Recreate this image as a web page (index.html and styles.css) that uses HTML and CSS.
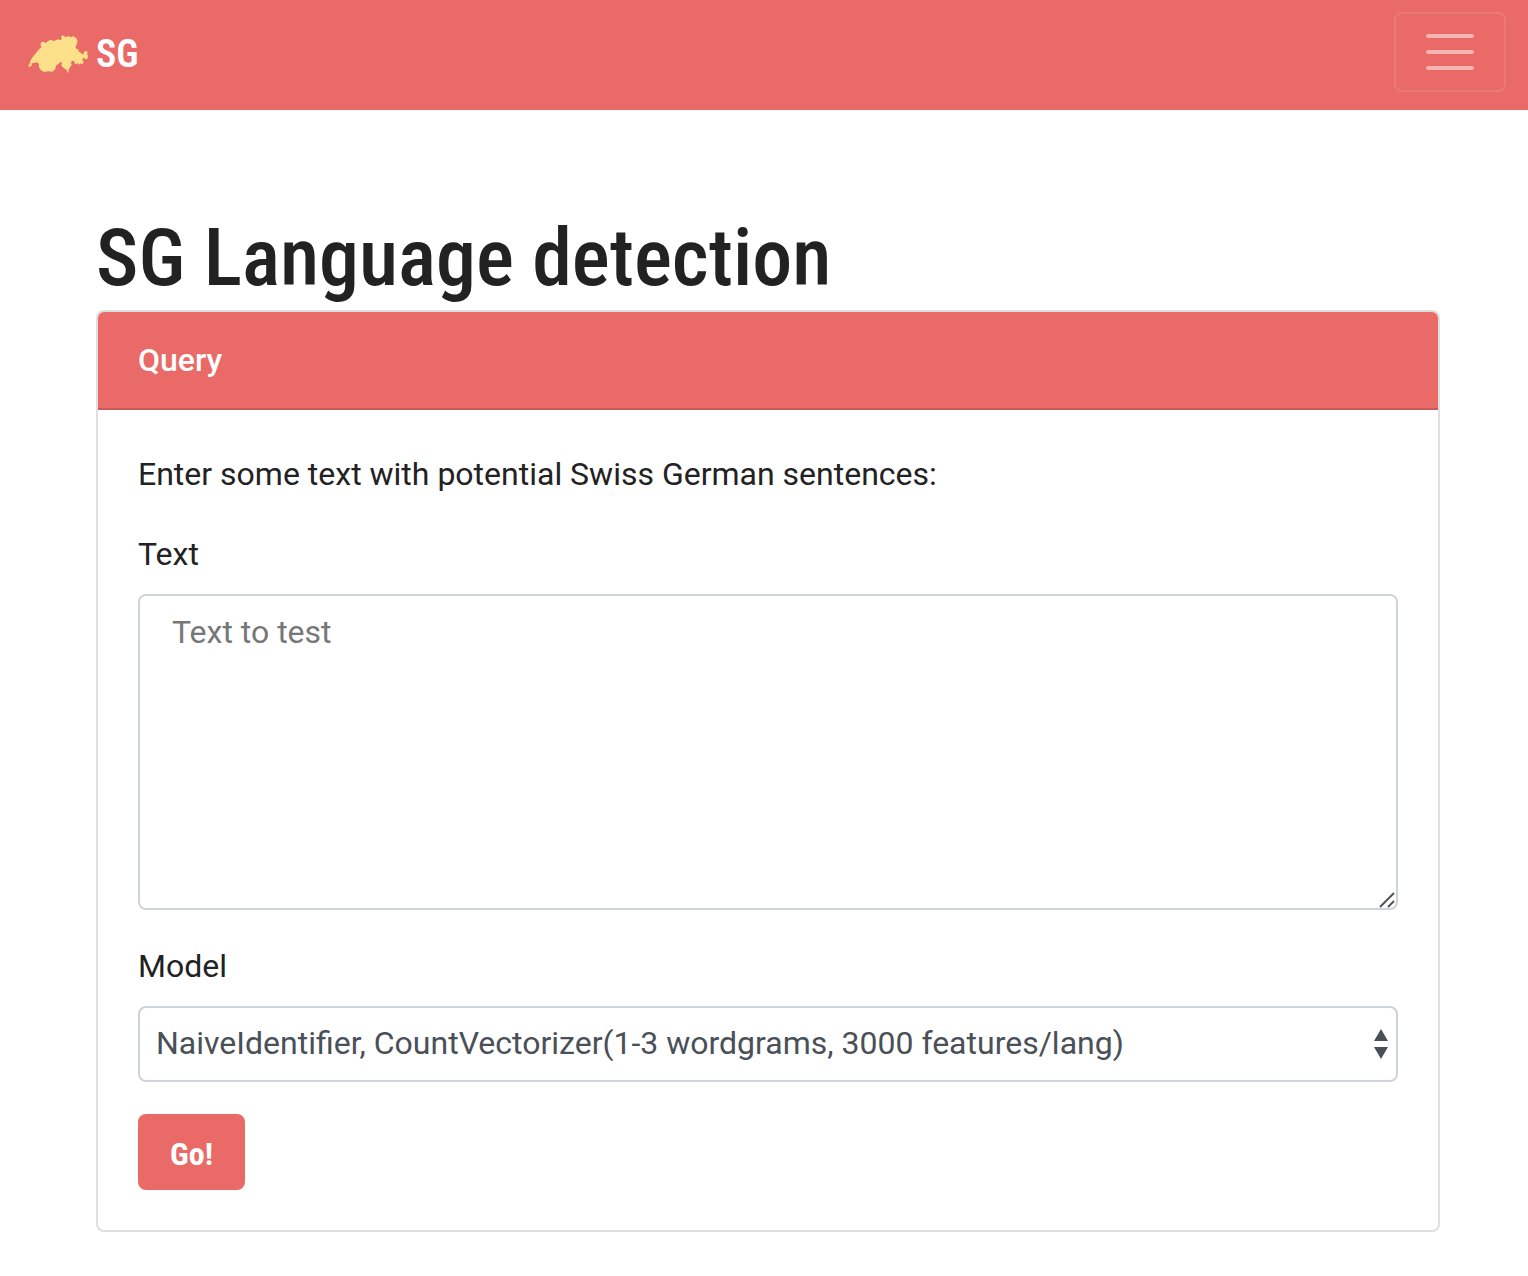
FILE: index.html
```html
<!DOCTYPE html>
<html lang="en">
<head>
<meta charset="utf-8">
<meta name="viewport" content="width=device-width, initial-scale=1">
<title>SG Language detection</title>
<link rel="stylesheet" href="styles.css">
</head>
<body>
<nav class="navbar">
  <a class="brand" href="#">
    <svg class="brand-logo" viewBox="36 44 180 114" aria-hidden="true">
      <path d="M37 139 L38 134 L42 130 L41 126 L48 113 L58 100 L69 87 L77 80 L73 73 L76 66 L83 64 L88 68 L94 64 L103 58 L114 62 L126 57 L134 60 L137 56 L135 49 L140 45 L148 50 L158 47 L164 51 L172 48 L181 54 L185 62 L182 72 L178 83 L188 88 L187 93 L194 97 L199 102 L204 101 L203 96 L209 92 L215 94 L213 102 L216 107 L214 117 L208 116 L203 112 L199 117 L203 126 L200 132 L194 129 L191 133 L186 129 L177 132 L174 122 L168 121 L165 126 L167 134 L161 142 L158 147 L157 157 L154 156 L152 149 L144 144 L136 136 L138 127 L134 125 L128 130 L120 136 L117 148 L108 154 L96 153 L84 155 L74 149 L69 140 L68 129 L60 126 L52 129 L47 128 L47 136 L41 139Z"/>
    </svg>
    <span>SG</span>
  </a>
  <button class="toggler" type="button" aria-label="Toggle navigation">
    <span class="toggler-bar"></span>
    <span class="toggler-bar"></span>
    <span class="toggler-bar"></span>
  </button>
</nav>

<main class="container">
  <h1 class="title">SG Language detection</h1>
  <section class="card">
    <h2 class="card-header">Query</h2>
    <form class="card-body">
      <p class="intro">Enter some text with potential Swiss German sentences:</p>
      <div class="field">
        <label for="text">Text</label>
        <div class="control">
          <textarea class="input text-input" id="text" rows="6" placeholder="Text to test"></textarea>
          <svg class="grip" viewBox="0 0 16 16" aria-hidden="true"><path d="M1 15 L15 1 M9 15 L15 9"/></svg>
        </div>
      </div>
      <div class="field">
        <label for="model">Model</label>
        <div class="control">
          <select class="input model-select" id="model">
            <option>NaiveIdentifier, CountVectorizer(1-3 wordgrams, 3000 features/lang)</option>
          </select>
          <svg class="arrows" viewBox="0 0 14 30" aria-hidden="true"><path d="M7 0 L14 12 H0Z M0 18 H14 L7 30Z"/></svg>
        </div>
      </div>
      <button class="submit" type="button">Go!</button>
    </form>
  </section>
</main>
</body>
</html>
```
FILE: styles.css
```css
*,
*::before,
*::after {
  box-sizing: border-box;
}

:root {
  --primary: #e96a67;
  --heading-font: "Roboto Condensed", "Arial Narrow", "Liberation Sans Narrow", sans-serif;
}

body {
  margin: 0;
  background: #fff;
  color: #222;
  font-family: Roboto, sans-serif;
  font-size: 32px;
  line-height: 48px;
}

.navbar {
  display: flex;
  align-items: flex-start;
  justify-content: space-between;
  padding: 12px 22px 18px 28px;
  background: var(--primary);
}

.brand {
  display: flex;
  align-items: center;
  gap: 8px;
  height: 80px;
  padding-top: 4px;
  color: #fff;
  font: 600 38px/48px var(--heading-font);
  text-decoration: none;
}

.brand-logo {
  width: 60px;
  height: 38px;
  fill: #ffe08a;
}

.toggler {
  display: flex;
  flex-direction: column;
  align-items: center;
  justify-content: center;
  gap: 12px;
  width: 112px;
  height: 80px;
  padding: 0;
  border: 2px solid rgba(255, 255, 255, 0.1);
  border-radius: 8px;
  background: transparent;
}

.toggler-bar {
  width: 48px;
  height: 4px;
  border-radius: 2px;
  background: rgba(255, 255, 255, 0.5);
}

.container {
  padding: 104px 88px 44px 96px;
}

.title {
  margin: 0;
  padding: 0 0 8px;
  font: 500 80px/88px var(--heading-font);
}

.card {
  border: 2px solid #dfdfdf;
  border-radius: 8px;
  overflow: hidden;
}

.card-header {
  margin: 0;
  padding: 24px 40px;
  border-bottom: 2px solid #ca5b5a;
  background: var(--primary);
  color: #fff;
  font-size: 32px;
  font-weight: 500;
}

.card-body {
  padding: 40px;
}

.intro {
  margin: 0 0 32px;
}

.field {
  margin-bottom: 32px;
}

.field label {
  display: block;
  margin-bottom: 16px;
}

.control {
  position: relative;
}

.input {
  display: block;
  width: 100%;
  border: 2px solid #ced4da;
  border-radius: 8px;
  background: #fff;
  color: #495057;
  font: inherit;
}

.text-input {
  padding: 12px 32px;
  resize: none;
}

.text-input::placeholder {
  color: #777;
}

.grip {
  position: absolute;
  right: 3px;
  bottom: 2px;
  width: 16px;
  height: 16px;
  fill: none;
  stroke: #555;
  stroke-width: 2;
}

.model-select {
  height: 76px;
  padding: 0 48px 2px 16px;
  appearance: none;
}

.arrows {
  position: absolute;
  top: 23px;
  right: 10px;
  width: 14px;
  height: 30px;
  fill: #495057;
}

.submit {
  display: block;
  height: 76px;
  padding: 4px 32px 0;
  border: 0;
  border-radius: 8px;
  background: var(--primary);
  color: #fff;
  font: 700 32px/48px var(--heading-font);
}
```
